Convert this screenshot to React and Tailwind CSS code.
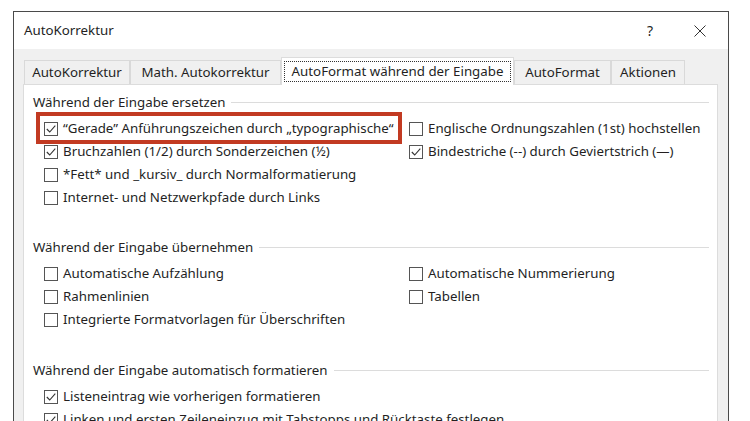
import React from "react";

const font = { fontFamily: '"Noto Sans", "Open Sans", sans-serif' };

const Box = ({ checked }) => (
  <span className="w-[14px] h-[14px] shrink-0 border border-[#555] bg-white flex items-center justify-center">
    {checked && (
      <svg width="12" height="12" viewBox="0 0 12 12">
        <path d="M1.8 6 L4.7 9 L10.3 2.6" fill="none" stroke="#333" strokeWidth="1.1" />
      </svg>
    )}
  </span>
);

const Row = ({ checked, label, children }) => (
  <div className="relative h-[23px] flex items-center gap-[5px]">
    <Box checked={checked} />
    <span className="whitespace-nowrap">{label}</span>
    {children}
  </div>
);

const Heading = ({ text }) => (
  <div className="h-[17px] flex items-center pl-[9px] pr-[8px]">
    <span className="whitespace-nowrap">{text}</span>
    <span className="flex-1 h-px bg-[#dcdcdc] ml-[6px]" />
  </div>
);

const Section = ({ title, left, right, className }) => (
  <div className={className}>
    <Heading text={title} />
    <div className="grid grid-cols-[365px_1fr] pl-[20px] mt-[6px]">
      <div className="flex flex-col">
        {left.map((r, i) => (
          <Row key={i} checked={r.c} label={r.t}>
            {r.mark && (
              <span className="absolute left-[-8px] top-[-5px] w-[366px] h-[32px] border-[4px] border-[#c23a22]" />
            )}
          </Row>
        ))}
      </div>
      <div className="flex flex-col">
        {right.map((r, i) => (
          <Row key={i} checked={r.c} label={r.t} />
        ))}
      </div>
    </div>
  </div>
);

const tabs = [
  { t: "AutoKorrektur", w: "w-[106px]" },
  { t: "Math. Autokorrektur", w: "w-[151px]" },
  { t: "AutoFormat während der Eingabe", w: "w-[233px]", active: true },
  { t: "AutoFormat", w: "w-[97px]" },
  { t: "Aktionen", w: "w-[74px]" },
];

export default function App() {
  return (
    <div className="w-[750px] h-[421px] bg-white overflow-hidden pt-[11px] pl-[13px] text-[13.3px] text-[#241f1f]" style={font}>
      <div className="w-[716px] h-[420px] border border-b-0 border-[#4a4a4a] flex flex-col">
        <div className="h-[37px] bg-white flex items-center pl-[10px] shrink-0">
          <span className="flex-1">AutoKorrektur</span>
          <span className="w-[20px] text-center mr-[34px] text-[14px]">?</span>
          <svg width="12" height="12" viewBox="0 0 12 12" className="mr-[22px]">
            <path d="M0.5 0.5 L11.5 11.5 M11.5 0.5 L0.5 11.5" stroke="#333" strokeWidth="1" />
          </svg>
        </div>
        <div className="flex-1 bg-[#f0f0f0] pt-[9px] pl-[9px] pr-[10px] flex flex-col">
          <div className="flex items-end h-[26px] pl-[1px] relative z-10">
            {tabs.map((tab) =>
              tab.active ? (
                <div key={tab.t} className={`${tab.w} h-[28px] mb-[-1px] bg-white border border-b-0 border-[#dcdcdc] flex items-center px-[2px]`}>
                  <span className="flex-1 text-center whitespace-nowrap border border-dotted border-[#333] leading-[19px]">{tab.t}</span>
                </div>
              ) : (
                <div key={tab.t} className={`${tab.w} h-[24px] bg-[#f0f0f0] border border-b-0 border-[#d9d9d9] flex items-center justify-center whitespace-nowrap`}>
                  {tab.t}
                </div>
              )
            )}
          </div>
          <div className="flex-1 bg-white border border-[#dcdcdc] pt-[9px]">
            <Section
              title="Während der Eingabe ersetzen"
              className="mb-[30px]"
              left={[
                { c: true, t: "\u201CGerade\u201D Anführungszeichen durch \u201Etypographische\u201C", mark: true },
                { c: true, t: "Bruchzahlen (1/2) durch Sonderzeichen (½)" },
                { c: false, t: "*Fett* und _kursiv_ durch Normalformatierung" },
                { c: false, t: "Internet- und Netzwerkpfade durch Links" },
              ]}
              right={[
                { c: false, t: "Englische Ordnungszahlen (1st) hochstellen" },
                { c: true, t: "Bindestriche (--) durch Geviertstrich (—)" },
              ]}
            />
            <Section
              title="Während der Eingabe übernehmen"
              className="mb-[31px]"
              left={[
                { c: false, t: "Automatische Aufzählung" },
                { c: false, t: "Rahmenlinien" },
                { c: false, t: "Integrierte Formatvorlagen für Überschriften" },
              ]}
              right={[
                { c: false, t: "Automatische Nummerierung" },
                { c: false, t: "Tabellen" },
              ]}
            />
            <Section
              title="Während der Eingabe automatisch formatieren"
              left={[
                { c: true, t: "Listeneintrag wie vorherigen formatieren" },
                { c: true, t: "Linken und ersten Zeileneinzug mit Tabstopps und Rücktaste festlegen" },
              ]}
              right={[]}
            />
          </div>
        </div>
      </div>
    </div>
  );
}
